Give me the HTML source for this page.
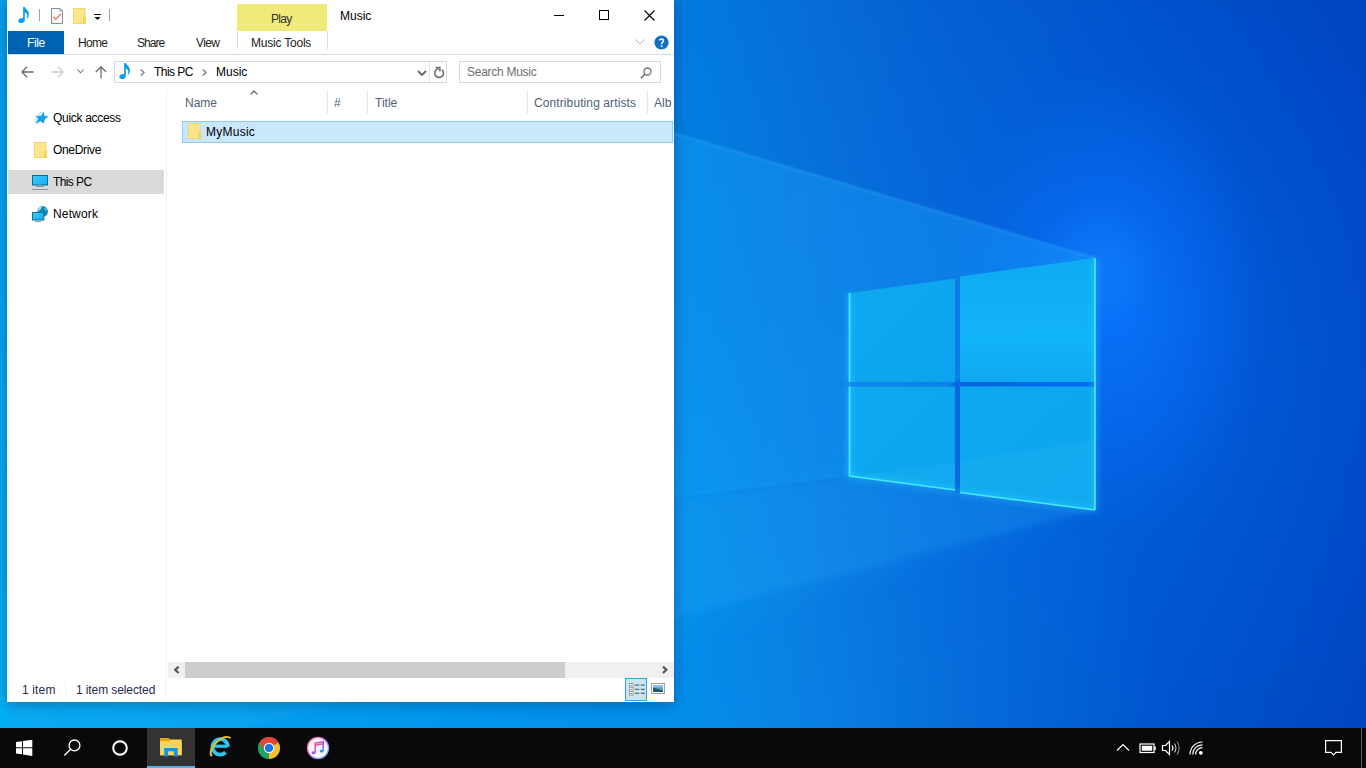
<!DOCTYPE html>
<html><head><meta charset="utf-8">
<style>
html,body{margin:0;padding:0;}
body{width:1366px;height:768px;overflow:hidden;position:relative;font-family:"Liberation Sans",sans-serif;font-size:12px;background:#0060d0;}
.a{position:absolute;}
.t{position:absolute;line-height:12px;white-space:nowrap;font-size:12px;}
#wall{position:absolute;left:0;top:0;width:1366px;height:768px;}
#win{position:absolute;left:7px;top:0;width:667px;height:702px;background:#fff;box-shadow:0 2px 14px rgba(0,20,60,0.35);overflow:hidden;}
#taskbar{position:absolute;left:0;top:728px;width:1366px;height:40px;background:#090909;}
</style></head>
<body>
<svg id="wall" width="1366" height="768" viewBox="0 0 1366 768">
  <defs>
    <linearGradient id="gbase" x1="0" y1="0" x2="1366" y2="0" gradientUnits="userSpaceOnUse">
      <stop offset="0" stop-color="#00aaf0"/>
      <stop offset="0.493" stop-color="#0088e6"/>
      <stop offset="0.586" stop-color="#0878de"/>
      <stop offset="0.695" stop-color="#0566d6"/>
      <stop offset="0.842" stop-color="#0054cc"/>
      <stop offset="1" stop-color="#0046c2"/>
    </linearGradient>
    <radialGradient id="gbotl" cx="700" cy="768" r="480" gradientUnits="userSpaceOnUse">
      <stop offset="0" stop-color="#10a8ff" stop-opacity="0.24"/>
      <stop offset="1" stop-color="#10a8ff" stop-opacity="0"/>
    </radialGradient>
    <linearGradient id="gtop" x1="0" y1="0" x2="0" y2="768" gradientUnits="userSpaceOnUse">
      <stop offset="0" stop-color="#0030b0" stop-opacity="0.14"/>
      <stop offset="0.3" stop-color="#0030b0" stop-opacity="0.06"/>
      <stop offset="0.6" stop-color="#0030b0" stop-opacity="0"/>
    </linearGradient>
    <linearGradient id="gbeam" x1="674" y1="0" x2="1095" y2="0" gradientUnits="userSpaceOnUse">
      <stop offset="0" stop-color="#20b0ff" stop-opacity="0.28"/>
      <stop offset="1" stop-color="#20a8ff" stop-opacity="0.38"/>
    </linearGradient>
    <linearGradient id="gleft" x1="0" y1="0" x2="0" y2="728" gradientUnits="userSpaceOnUse">
      <stop offset="0" stop-color="#00a2ee"/>
      <stop offset="1" stop-color="#00b0f4"/>
    </linearGradient>
    <linearGradient id="gbot" x1="0" y1="0" x2="674" y2="0" gradientUnits="userSpaceOnUse">
      <stop offset="0" stop-color="#00acf0"/>
      <stop offset="1" stop-color="#0894e8"/>
    </linearGradient>
    <radialGradient id="glow" cx="0.5" cy="0.5" r="0.5">
      <stop offset="0" stop-color="#0a78ff" stop-opacity="0.85"/>
      <stop offset="0.5" stop-color="#0a70ff" stop-opacity="0.45"/>
      <stop offset="1" stop-color="#0a70ff" stop-opacity="0"/>
    </radialGradient>
    <radialGradient id="spot" cx="0.5" cy="0.5" r="0.5">
      <stop offset="0" stop-color="#1a88ff" stop-opacity="0.35"/>
      <stop offset="1" stop-color="#2090ff" stop-opacity="0"/>
    </radialGradient>
    <radialGradient id="broad" cx="1130" cy="340" r="420" gradientUnits="userSpaceOnUse">
      <stop offset="0" stop-color="#0878ff" stop-opacity="0.35"/>
      <stop offset="1" stop-color="#0070ff" stop-opacity="0"/>
    </radialGradient>
    <linearGradient id="pane1" x1="0" y1="0" x2="1" y2="1">
      <stop offset="0" stop-color="#0ea8f0"/><stop offset="1" stop-color="#0ca4ee"/>
    </linearGradient>
    <linearGradient id="pane2" x1="0" y1="0" x2="0" y2="1">
      <stop offset="0" stop-color="#0eaaf2"/><stop offset="0.65" stop-color="#12b4f8"/><stop offset="1" stop-color="#0ea8f0"/>
    </linearGradient>
    <filter id="blur1"><feGaussianBlur stdDeviation="1"/></filter>
    <filter id="blur3"><feGaussianBlur stdDeviation="3"/></filter>
    <filter id="blur12"><feGaussianBlur stdDeviation="12"/></filter>
  </defs>
  <rect width="1366" height="768" fill="url(#gbase)"/>
  <rect width="1366" height="768" fill="url(#gtop)"/>
  <rect width="1366" height="768" fill="url(#gbotl)"/>
  <rect width="1366" height="768" fill="url(#broad)"/>
  <ellipse cx="1115" cy="300" rx="150" ry="230" fill="url(#glow)"/>
  <ellipse cx="1098" cy="262" rx="60" ry="60" fill="url(#spot)"/>
  <polygon points="1095,258 0,-66 0,583 849,476" fill="url(#gbeam)" filter="url(#blur1)"/>
  <polygon points="849,476 0,583 0,850 1095,510" fill="#20b0ff" opacity="0.08" filter="url(#blur12)"/>
  <polygon points="849,476 955,490 1095,510 0,790 0,583" fill="#30b8ff" opacity="0.16" filter="url(#blur3)"/>
  <line x1="1095" y1="258" x2="0" y2="-66" stroke="#5ac8ff" stroke-width="1.6" opacity="0.3" filter="url(#blur1)"/>
  <rect x="0" y="0" width="8" height="728" fill="url(#gleft)"/>
  <g>
    <polygon points="849.5,293 955,278.5 955,382 849.5,382" fill="url(#pane1)"/>
    <polygon points="960,276.5 1095,258 1095,382 960,382" fill="url(#pane2)"/>
    <polygon points="849.5,386.5 955,386.5 955,490 849.5,476" fill="url(#pane1)"/>
    <polygon points="960,386.5 1095,386.5 1095,510 960,492.5" fill="url(#pane1)"/>
    <polygon points="849.5,477 955,462 955,490 849.5,476" fill="#50d0ff" opacity="0.1"/>
    <polygon points="960,461 1095,440 1095,510 960,492.5" fill="#50d0ff" opacity="0.1"/>
    <g fill="none" stroke="#30e0ff" stroke-width="5" opacity="0.4" filter="url(#blur3)">
      <polyline points="849.5,382 849.5,293"/>
      <polyline points="1095,258 1095,510"/>
      <polyline points="849.5,386.5 849.5,476 955,490"/>
      <polyline points="960,492.5 1095,510"/>
    </g>
    <g fill="none" stroke="#4aeefa" stroke-width="1.7" opacity="0.92">
      <polyline points="849.5,382 849.5,293"/>
      <polyline points="1095,258 1095,510"/>
      <polyline points="849.5,386.5 849.5,476 955,490"/>
      <polyline points="960,492.5 1095,510"/>
    </g>
  </g>
</svg>

<div id="win">
  <!-- title bar / QAT -->
  <svg class="a" style="left:11px;top:7px;overflow:visible" width="12" height="17" viewBox="0 0 12 17">
    <path d="M5.1,0 L6.8,0 C7.4,1.6 9.2,3 10.2,4.4 C11.2,5.8 11.3,8.6 9.8,11.6 L8.8,11 C9.6,9.2 9.5,7.8 8.6,6.8 C8,6.2 7.4,5.8 6.8,5.6 L6.8,13.2 C6.8,15.2 4.8,16.2 2.8,16 C0.8,15.8 -0.2,14.6 0.4,13.2 C1,11.8 3.4,10.8 5.1,11.2 Z" fill="#0a9ff0"/>
  </svg>
  <div class="a" style="left:32px;top:9px;width:1px;height:12px;background:#a0a0a0"></div>
  <svg class="a" style="left:44px;top:8px" width="13" height="16" viewBox="0 0 13 16">
    <path d="M0.5,0.5 L9,0.5 L11.5,3 L11.5,15.5 L0.5,15.5 Z" fill="#f7f8fa" stroke="#8a8a8a"/>
    <path d="M9,0.5 L9,3 L11.5,3" fill="none" stroke="#9a9a9a"/>
    <path d="M2.3,8.8 L4.7,11.3 L9.8,6" fill="none" stroke="#e07a4a" stroke-width="1.2"/>
  </svg>
  <svg class="a" style="left:66px;top:8px" width="14" height="16" viewBox="0 0 14 16">
    <rect x="0.5" y="0.5" width="11.5" height="15" fill="#fde58c" stroke="#f2d470" stroke-width="1"/>
    <rect x="10.4" y="9.6" width="2.3" height="6.4" fill="#f6d866" stroke="#eccb50" stroke-width="0.6"/>
  </svg>
  <svg class="a" style="left:87px;top:14px" width="8" height="7" viewBox="0 0 8 7">
    <rect x="0" y="0" width="7" height="1" fill="#111"/>
    <path d="M0.3,3 L6.7,3 L3.5,6 Z" fill="#111"/>
  </svg>
  <div class="a" style="left:102px;top:9px;width:1px;height:12px;background:#a0a0a0"></div>

  <div class="t" style="left:333px;top:10px;color:#000;">Music</div>

  <!-- window controls -->
  <div class="a" style="left:547px;top:15px;width:10px;height:1px;background:#000"></div>
  <div class="a" style="left:592px;top:10px;width:8px;height:8px;border:1px solid #000"></div>
  <svg class="a" style="left:637px;top:10px" width="11" height="11" viewBox="0 0 11 11">
    <path d="M0.5,0.5 L10.5,10.5 M10.5,0.5 L0.5,10.5" stroke="#000" stroke-width="1.1"/>
  </svg>

  <!-- Play contextual header -->
  <div class="a" style="left:230px;top:4px;width:90px;height:27px;background:#f0ea78"></div>
  <div class="t" style="left:264px;top:13px;color:#333;letter-spacing:-0.7px">Play</div>
  <div class="a" style="left:230px;top:31px;width:1px;height:18px;background:#dadada"></div>
  <div class="a" style="left:320px;top:31px;width:1px;height:18px;background:#dadada"></div>

  <!-- ribbon tabs -->
  <div class="a" style="left:1px;top:31px;width:56px;height:23px;background:#0063b1"></div>
  <div class="t" style="left:20px;top:37px;color:#fff;letter-spacing:-0.4px">File</div>
  <div class="t" style="left:71px;top:37px;color:#222;letter-spacing:-0.7px">Home</div>
  <div class="t" style="left:130px;top:37px;color:#222;letter-spacing:-0.95px">Share</div>
  <div class="t" style="left:189px;top:37px;color:#222;letter-spacing:-0.63px">View</div>
  <div class="t" style="left:244px;top:37px;color:#222;letter-spacing:-0.21px">Music Tools</div>

  <!-- ribbon minimize chevron + help -->
  <svg class="a" style="left:628px;top:39px" width="10" height="6" viewBox="0 0 10 6">
    <path d="M0.5,0.5 L5,5 L9.5,0.5" fill="none" stroke="#a8a8a8" stroke-width="1"/>
  </svg>
  <svg class="a" style="left:647px;top:35px" width="15" height="15" viewBox="0 0 15 15">
    <circle cx="7.5" cy="7.5" r="7.1" fill="#0f70c6"/>
    <path d="M5.7,5.5 C5.7,3.5 9.4,3.5 9.4,5.6 C9.4,7.1 7.6,7.3 7.6,9.2" fill="none" stroke="#fff" stroke-width="1.5"/>
    <rect x="6.8" y="10.4" width="1.6" height="1.7" fill="#fff"/>
  </svg>
  <div class="a" style="left:0;top:54px;width:667px;height:1px;background:#dadbdc"></div>

  <!-- nav buttons -->
  <svg class="a" style="left:14px;top:66px" width="13" height="12" viewBox="0 0 13 12">
    <path d="M6,0.8 L1,6 L6,11.2 M1,6 L12.5,6" fill="none" stroke="#6e6e6e" stroke-width="1.3"/>
  </svg>
  <svg class="a" style="left:44px;top:66px" width="13" height="12" viewBox="0 0 13 12">
    <path d="M7,0.8 L12,6 L7,11.2 M0.5,6 L12,6" fill="none" stroke="#cccccc" stroke-width="1.3"/>
  </svg>
  <svg class="a" style="left:70px;top:69px" width="7" height="5" viewBox="0 0 7 5">
    <path d="M0.5,0.5 L3.5,3.8 L6.5,0.5" fill="none" stroke="#6e6e6e" stroke-width="1.1"/>
  </svg>
  <svg class="a" style="left:88px;top:66px" width="12" height="13" viewBox="0 0 12 13">
    <path d="M0.8,6 L6,0.8 L11.2,6 M6,1 L6,12.5" fill="none" stroke="#6e6e6e" stroke-width="1.3"/>
  </svg>

  <!-- address box -->
  <div class="a" style="left:107px;top:61px;width:331px;height:20px;border:1px solid #d9d9d9;"></div>
  <div class="a" style="left:422px;top:62px;width:1px;height:20px;background:#e5e5e5"></div>
  <svg class="a" style="left:112px;top:63px;overflow:visible" width="12" height="17" viewBox="0 0 12 17">
    <path d="M5.1,0 L6.8,0 C7.4,1.6 9.2,3 10.2,4.4 C11.2,5.8 11.3,8.6 9.8,11.6 L8.8,11 C9.6,9.2 9.5,7.8 8.6,6.8 C8,6.2 7.4,5.8 6.8,5.6 L6.8,13.2 C6.8,15.2 4.8,16.2 2.8,16 C0.8,15.8 -0.2,14.6 0.4,13.2 C1,11.8 3.4,10.8 5.1,11.2 Z" fill="#0a9ff0"/>
  </svg>
  <svg class="a" style="left:133px;top:69px" width="5" height="7" viewBox="0 0 5 7">
    <path d="M0.8,0.5 L4,3.5 L0.8,6.5" fill="none" stroke="#7a7a7a" stroke-width="1.3"/>
  </svg>
  <div class="t" style="left:147px;top:66px;color:#000;letter-spacing:-0.55px">This PC</div>
  <svg class="a" style="left:195px;top:69px" width="5" height="7" viewBox="0 0 5 7">
    <path d="M0.8,0.5 L4,3.5 L0.8,6.5" fill="none" stroke="#7a7a7a" stroke-width="1.3"/>
  </svg>
  <div class="t" style="left:209px;top:66px;color:#000;">Music</div>
  <svg class="a" style="left:410px;top:70px" width="10" height="7" viewBox="0 0 10 7">
    <path d="M1,1 L5,5 L9,1" fill="none" stroke="#666" stroke-width="1.8"/>
  </svg>
  <svg class="a" style="left:426px;top:66px" width="12" height="14" viewBox="0 0 12 14">
    <path d="M8.93,3.63 A4.4,4.4 0 1 1 5.72,2.62" fill="none" stroke="#707070" stroke-width="1.7"/>
    <path d="M2.6,1.5 L6.9,1.5 L6.9,5.6" fill="none" stroke="#707070" stroke-width="1.6"/>
  </svg>

  <!-- search box -->
  <div class="a" style="left:452px;top:61px;width:200px;height:20px;border:1px solid #d9d9d9;"></div>
  <div class="t" style="left:460px;top:66px;color:#6d6d6d;letter-spacing:-0.27px">Search Music</div>
  <svg class="a" style="left:633px;top:67px" width="12" height="12" viewBox="0 0 12 12">
    <circle cx="7.5" cy="4.5" r="3.5" fill="none" stroke="#6e6e6e" stroke-width="1.3"/>
    <path d="M5,7 L0.8,11.2" stroke="#6e6e6e" stroke-width="1.6"/>
  </svg>

  <!-- nav pane -->
  <div class="a" style="left:159px;top:89px;width:1px;height:592px;background:#f0f0f0"></div>
  <div class="a" style="left:1px;top:170px;width:156px;height:24px;background:#d9d9d9"></div>
  <svg class="a" style="left:23px;top:106px" width="22" height="22" viewBox="0 0 22 22">
    <path d="M13.5,6.2 L14.2,10.3 L17.9,10.5 L14.6,13.2 L13.5,17.2 L10.5,14.8 L6.3,17.5 L8.4,12.8 L6,10.2 L11.2,10.2 Z" fill="#12a2ec" stroke="#1590d8" stroke-width="0.6" stroke-linejoin="round"/>
    <path d="M9.4,6.6 L12.4,6.6 M7.8,8.6 L10.4,8.6 M4.8,13.4 L7.4,13.4 M3.8,15.6 L6.4,15.6" stroke="#1a98e0" stroke-width="0.7" opacity="0.5"/>
  </svg>
  <div class="t" style="left:46px;top:112px;color:#000;letter-spacing:-0.31px">Quick access</div>
  <svg class="a" style="left:27px;top:142px" width="13" height="16" viewBox="0 0 13 16">
    <rect x="0.5" y="0.5" width="11.5" height="15" fill="#fde58c" stroke="#f2d470" stroke-width="1"/>
    <rect x="10.4" y="9.6" width="2.3" height="6.4" fill="#f6d866" stroke="#eccb50" stroke-width="0.6"/>
  </svg>
  <div class="t" style="left:46px;top:144px;color:#000;letter-spacing:-0.34px">OneDrive</div>
  <svg class="a" style="left:25px;top:175px" width="17" height="16" viewBox="0 0 17 16">
    <defs><linearGradient id="mong" x1="0" y1="0" x2="1" y2="1"><stop offset="0" stop-color="#40ccf8"/><stop offset="1" stop-color="#0aaef2"/></linearGradient></defs>
    <rect x="0.5" y="0.5" width="15" height="9.5" fill="url(#mong)" stroke="#0c6c92" stroke-width="1"/>
    <rect x="4" y="11" width="8" height="1" fill="#8494a4"/>
    <rect x="0" y="14" width="16" height="1" fill="#8a98a8"/>
  </svg>
  <div class="t" style="left:46px;top:176px;color:#000;letter-spacing:-0.6px">This PC</div>
  <svg class="a" style="left:25px;top:202px" width="18" height="22" viewBox="0 0 18 22">
    <circle cx="10.7" cy="9.4" r="5.3" fill="#1787b4"/>
    <path d="M7,6 C8,4.6 9.6,4.2 10.6,4.6 C10,5.8 9,6.4 8.6,7.6 C8,8.6 6.8,8.8 6,9.2 C6,8 6.4,6.8 7,6 Z" fill="#8ae4fb"/>
    <path d="M12.6,5.4 C14,6 15.2,7.4 15.6,9 C14.6,8.6 13.6,7.8 12.6,7.4 Z" fill="#5ac4e8"/>
    <rect x="0.5" y="10.5" width="11.3" height="7.5" fill="url(#mong)" stroke="#0c6c92" stroke-width="1"/>
    <rect x="3" y="19.2" width="6" height="0.9" fill="#7a8898"/>
  </svg>
  <div class="t" style="left:46px;top:208px;color:#000;letter-spacing:0.15px">Network</div>

  <!-- column headers -->
  <svg class="a" style="left:243px;top:90px" width="8" height="5" viewBox="0 0 8 5">
    <path d="M0.6,4.4 L4,1 L7.4,4.4" fill="none" stroke="#505050" stroke-width="1.2"/>
  </svg>
  <div class="t" style="left:178px;top:97px;color:#4c607a;">Name</div>
  <div class="a" style="left:320px;top:90px;width:1px;height:24px;background:#e5e5e5"></div>
  <div class="t" style="left:327px;top:97px;color:#4c607a;">#</div>
  <div class="a" style="left:360px;top:90px;width:1px;height:24px;background:#e5e5e5"></div>
  <div class="t" style="left:368px;top:97px;color:#4c607a;">Title</div>
  <div class="a" style="left:520px;top:90px;width:1px;height:24px;background:#e5e5e5"></div>
  <div class="t" style="left:527px;top:97px;color:#4c607a;letter-spacing:0.1px">Contributing artists</div>
  <div class="a" style="left:640px;top:90px;width:1px;height:24px;background:#e5e5e5"></div>
  <div class="t" style="left:647px;top:97px;width:18px;overflow:hidden;color:#4c607a;">Album</div>

  <!-- selected row -->
  <div class="a" style="left:175px;top:121px;width:489px;height:20px;background:#c9e6fb;border:1px solid #90cdf0;"></div>
  <svg class="a" style="left:181px;top:123px" width="14" height="16" viewBox="0 0 14 16">
    <rect x="0.5" y="0.5" width="11.5" height="15" fill="#fde58c" stroke="#f2d470" stroke-width="1"/>
    <rect x="10.4" y="9.6" width="2.3" height="6.4" fill="#f6d866" stroke="#eccb50" stroke-width="0.6"/>
  </svg>
  <div class="t" style="left:199px;top:126px;color:#000;letter-spacing:0.25px">MyMusic</div>

  <!-- horizontal scrollbar -->
  <div class="a" style="left:161px;top:662px;width:506px;height:16px;background:#f0f0f0"></div>
  <div class="a" style="left:178px;top:662px;width:380px;height:16px;background:#cdcdcd"></div>
  <svg class="a" style="left:166px;top:666px" width="8" height="8" viewBox="0 0 8 8">
    <path d="M5.6,0.6 L2.2,3.8 L5.6,7" fill="none" stroke="#555" stroke-width="2.2"/>
  </svg>
  <svg class="a" style="left:654px;top:666px" width="8" height="8" viewBox="0 0 8 8">
    <path d="M2,0.6 L5.4,3.8 L2,7" fill="none" stroke="#555" stroke-width="2.2"/>
  </svg>

  <!-- status bar -->
  <div class="t" style="left:15px;top:684px;color:#1e2a4e;letter-spacing:0.15px">1 item</div>
  <div class="a" style="left:58px;top:681px;width:1px;height:17px;background:#f0f0f0"></div>
  <div class="t" style="left:69px;top:684px;color:#1e2a4e;letter-spacing:-0.1px">1 item selected</div>
  <div class="a" style="left:158px;top:681px;width:1px;height:17px;background:#f0f0f0"></div>
  <div class="a" style="left:618px;top:678px;width:20px;height:21px;background:#c7e5f7;border:1px solid #3a9fd2;"></div>
  <svg class="a" style="left:621px;top:682px" width="18" height="16" viewBox="0 0 18 16">
    <rect x="1.5" y="1.5" width="3.5" height="3.5" fill="#fff" stroke="#a0a0a0" stroke-width="1"/>
    <rect x="1.5" y="5.6" width="3.5" height="3.5" fill="#fff" stroke="#a0a0a0" stroke-width="1"/>
    <rect x="1.5" y="9.7" width="3.5" height="3.5" fill="#fff" stroke="#a0a0a0" stroke-width="1"/>
    <rect x="2.8" y="2.8" width="1" height="1" fill="#555"/>
    <rect x="2.8" y="6.9" width="1" height="1" fill="#555"/>
    <rect x="2.8" y="11" width="1" height="1" fill="#d02020"/>
    <path d="M6.8,3.2 L11.2,3.2 M12.8,3.2 L16.8,3.2 M6.8,7.3 L11.2,7.3 M12.8,7.3 L16.8,7.3 M6.8,11.4 L11.2,11.4 M12.8,11.4 L16.8,11.4" stroke="#6a6a6a" stroke-width="1.2"/>
  </svg>
  <svg class="a" style="left:644px;top:683px" width="14" height="11" viewBox="0 0 14 11">
    <defs><linearGradient id="picg" x1="0" y1="0" x2="0" y2="1"><stop offset="0" stop-color="#9fd0ea"/><stop offset="0.5" stop-color="#5a9ec0"/><stop offset="1" stop-color="#e8f0f4"/></linearGradient></defs>
    <rect x="0.5" y="0.5" width="13" height="10" fill="#fafafa" stroke="#a0a0a0"/>
    <rect x="2" y="2" width="10" height="7" fill="url(#picg)"/>
    <path d="M2,5 C4,4.6 7,6 12,7.2 L12,9 L2,9 Z" fill="#1f5a66"/>
  </svg>
</div>

<div id="taskbar">
  <svg class="a" style="left:15px;top:11px" width="18" height="18" viewBox="0 0 18 18">
    <path d="M1,3.1 L7,2.2 L7,8.3 L1,8.3 Z M8,2.05 L17.3,0.8 L17.3,8.3 L8,8.3 Z M1,9.3 L7,9.3 L7,15.3 L1,14.5 Z M8,9.3 L17.3,9.3 L17.3,16.9 L8,15.5 Z" fill="#fff"/>
  </svg>
  <svg class="a" style="left:62px;top:10px" width="22" height="20" viewBox="0 0 22 20">
    <circle cx="12.5" cy="7.4" r="5.4" fill="none" stroke="#fff" stroke-width="1.3"/>
    <path d="M8.6,11.3 L2.3,17.6" stroke="#fff" stroke-width="1.4"/>
  </svg>
  <svg class="a" style="left:110px;top:10px" width="20" height="20" viewBox="0 0 20 20">
    <circle cx="10" cy="10" r="6.8" fill="none" stroke="#fff" stroke-width="2"/>
  </svg>
  <div class="a" style="left:147px;top:0;width:48px;height:40px;background:#333333"></div>
  <div class="a" style="left:147px;top:38px;width:48px;height:2px;background:#52b3ec"></div>
  <svg class="a" style="left:159px;top:9px" width="24" height="21" viewBox="0 0 24 21">
    <path d="M1,1.2 L9.5,1.2 L10.8,2.6 L22.6,2.6 L22.6,18.2 L1,18.2 Z" fill="#ffd45a"/>
    <path d="M1,1.2 L9.5,1.2 L10.8,2.6 L10.8,4.4 L1,4.4 Z" fill="#e9a311"/>
    <path d="M1,4.4 L22.6,4.4 L22.6,18.2 L1,18.2 Z" fill="#ffd45a"/>
    <path d="M5.2,11 L18.7,11 L18.7,19.6 L14.8,19.6 L14.8,14.2 L9.1,14.2 L9.1,19.6 L5.2,19.6 Z" fill="#1a92dc"/>
  </svg>
  <svg class="a" style="left:207px;top:5px" width="27" height="27" viewBox="0 0 27 27">
    <path d="M5.6,13.2 L20.8,13.2" stroke="#2ec4f0" stroke-width="3.2"/>
    <path d="M20.9,13.6 A7.7,7.7 0 1 0 18.6,19.4" fill="none" stroke="#2ec4f0" stroke-width="3.8"/>
    <path d="M5.6,13.2 L20.8,13.2" stroke="#1a9ad8" stroke-width="0.6" opacity="0.5" transform="translate(0,1.6)"/>
    <path d="M0.6,14.5 C0.6,10.5 6,7.6 13.5,7.6 C21,7.6 26.4,10.5 26.4,14.5" fill="none" stroke="#f0c02c" stroke-width="1.9" transform="rotate(-44 13.5 13.5)"/>
  </svg>
  <svg class="a" style="left:257px;top:8px" width="24" height="24" viewBox="0 0 24 24">
    <circle cx="12" cy="12" r="11" fill="#0f9d58"/>
    <path d="M12,12 L2.5,6.5 A11,11 0 0 1 21.5,6.5 Z" fill="#ea4335"/>
    <path d="M12,12 L21.5,6.5 A11,11 0 0 1 12,23 Z" fill="#fbc02d"/>
    <path d="M12,12 L12,23 A11,11 0 0 1 2.5,6.5 Z" fill="#1ea362"/>
    <path d="M7.2,9.2 L2.5,6.5 L7.5,14.5 Z" fill="#ea4335"/>
    <circle cx="12" cy="12" r="5.2" fill="#fff"/>
    <circle cx="12" cy="12" r="4.1" fill="#1a73e8"/>
  </svg>
  <svg class="a" style="left:306px;top:8px" width="24" height="24" viewBox="0 0 24 24">
    <defs><linearGradient id="itg" x1="0" y1="0" x2="1" y2="1">
      <stop offset="0" stop-color="#ff5a6e"/><stop offset="0.5" stop-color="#c05ae0"/><stop offset="1" stop-color="#2aa0f0"/></linearGradient>
      <linearGradient id="itr" x1="0" y1="0" x2="1" y2="1">
      <stop offset="0" stop-color="#ff6a8a"/><stop offset="0.5" stop-color="#c070f0"/><stop offset="1" stop-color="#40c8f8"/></linearGradient></defs>
    <circle cx="12" cy="12" r="10.6" fill="#f6f2f8" stroke="url(#itr)" stroke-width="1.2"/>
    <path d="M9.2,16.6 L9.2,7.2 L17.2,5.8 L17.2,14.8 M9.2,9.2 L17.2,7.8" fill="none" stroke="url(#itg)" stroke-width="1.6"/>
    <ellipse cx="7.6" cy="16.8" rx="1.9" ry="1.5" fill="#8a5ae8"/>
    <ellipse cx="15.6" cy="15" rx="1.9" ry="1.5" fill="#2a90e8"/>
  </svg>

  <!-- tray -->
  <svg class="a" style="left:1116px;top:15px" width="14" height="9" viewBox="0 0 14 9">
    <path d="M1,7.5 L7,1.5 L13,7.5" fill="none" stroke="#fff" stroke-width="1.2"/>
  </svg>
  <svg class="a" style="left:1139px;top:15px" width="18" height="11" viewBox="0 0 18 11">
    <rect x="1" y="1" width="14" height="8.5" fill="none" stroke="#fff" stroke-width="1.2"/>
    <rect x="2.8" y="2.8" width="10.4" height="4.9" fill="#fff"/>
    <rect x="15.2" y="3.5" width="1.6" height="3.5" fill="#fff"/>
  </svg>
  <svg class="a" style="left:1161px;top:12px" width="20" height="16" viewBox="0 0 20 16">
    <path d="M1.5,5.5 L4.5,5.5 L8.5,1.5 L8.5,14.5 L4.5,10.5 L1.5,10.5 Z" fill="none" stroke="#fff" stroke-width="1.2"/>
    <path d="M11,5.5 C12,6.8 12,9.2 11,10.5" fill="none" stroke="#fff" stroke-width="1.2"/>
    <path d="M13.5,3.5 C15.4,6 15.4,10 13.5,12.5" fill="none" stroke="#c8c8c8" stroke-width="1.1"/>
    <path d="M16,1.5 C18.8,5 18.8,11 16,14.5" fill="none" stroke="#8a8a8a" stroke-width="1.1"/>
  </svg>
  <svg class="a" style="left:1189px;top:13px" width="15" height="15" viewBox="0 0 15 15">
    <path d="M1,13.5 C1,6.5 6.5,1 13.5,1" fill="none" stroke="#fff" stroke-width="1.2"/>
    <path d="M3.8,13.5 C3.8,8 8,3.8 13.5,3.8" fill="none" stroke="#fff" stroke-width="1.2"/>
    <path d="M6.6,13.5 C6.6,9.6 9.6,6.6 13.5,6.6" fill="none" stroke="#fff" stroke-width="1.2"/>
    <circle cx="11.8" cy="11.8" r="1.9" fill="#fff"/>
  </svg>
  <svg class="a" style="left:1324px;top:11px" width="19" height="18" viewBox="0 0 19 18">
    <path d="M1.6,1.6 L17.4,1.6 L17.4,13.4 L12,13.4 L9.5,16 L7,13.4 L1.6,13.4 Z" fill="none" stroke="#fff" stroke-width="1.2"/>
  </svg>
  <div class="a" style="left:1361px;top:0;width:1px;height:40px;background:#5a5a5a"></div>
</div>
</body></html>
